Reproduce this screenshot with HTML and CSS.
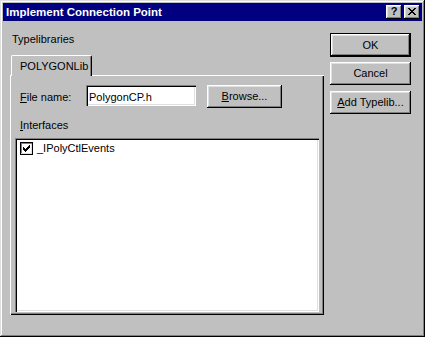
FILE: index.html
```html
<!DOCTYPE html>
<html lang="en">
<head>
  <meta charset="UTF-8">
  <title>Implement Connection Point</title>
  <link rel="stylesheet" href="styles.css">
</head>
<body>
  <div class="window">
    <div class="titlebar">
      <span class="title">Implement Connection Point</span>
      <div class="title-buttons">
        <span class="tbtn help">?</span>
        <span class="tbtn close">
          <svg width="8" height="7" viewBox="0 0 8 7" shape-rendering="crispEdges">
            <path fill="#000" d="M0 0h2v1h-2z M6 0h2v1h-2z M1 1h2v1h-2z M5 1h2v1h-2z M2 2h4v1h-4z M3 3h2v1h-2z M2 4h4v1h-4z M1 5h2v1h-2z M5 5h2v1h-2z M0 6h2v1h-2z M6 6h2v1h-2z"/>
          </svg>
        </span>
      </div>
    </div>

    <div class="dialog">
      <div class="main">
        <div class="group-label">Typelibraries</div>

        <!-- tab strip -->
        <div class="tabs">
          <div class="tab">POLYGONLib</div>
        </div>

        <div class="panel">
          <div class="file-row">
            <label class="file-label"><u>F</u>ile name:</label>
            <input class="field" type="text" value="PolygonCP.h">
            <button class="btn browse"><u>B</u>rowse...</button>
          </div>

          <div class="list-label"><u>I</u>nterfaces</div>

          <div class="listbox">
            <div class="item">
              <svg class="check" width="13" height="13" viewBox="0 0 13 13" shape-rendering="crispEdges">
                <rect x="0" y="0" width="13" height="13" fill="#000"/>
                <rect x="1" y="1" width="11" height="11" fill="#808080"/>
                <rect x="2" y="2" width="10" height="10" fill="#fff"/>
                <rect x="1" y="11" width="11" height="1" fill="#dfdfdf"/>
                <rect x="11" y="2" width="1" height="10" fill="#dfdfdf"/>
                <path fill="#000" d="M9 3h1v1h-1z M8 4h2v1h-2z M3 5h1v1h-1z M7 5h3v1h-3z M3 6h2v1h-2z M6 6h3v1h-3z M3 7h5v1h-5z M4 8h3v1h-3z M5 9h1v1h-1z"/>
              </svg>
              <span>_IPolyCtlEvents</span>
            </div>
          </div>
        </div>
      </div>

      <div class="side">
        <button class="btn default">OK</button>
        <button class="btn">Cancel</button>
        <button class="btn"><u>A</u>dd Typelib...</button>
      </div>
    </div>
  </div>
</body>
</html>
```

FILE: styles.css
```css
* {
  box-sizing: border-box;
}
body {
  margin: 0;
  font-family: "Liberation Sans", Arial, sans-serif;
  font-size: 11px;
  color: #000;
  background: #c0c0c0;
}
.window {
  width: 425px;
  height: 337px;
  padding: 3px;
  background: #c0c0c0;
  box-shadow: inset -1px -1px #000, inset 1px 1px #dfdfdf, inset -2px -2px #808080, inset 2px 2px #fff;
  display: flex;
  flex-direction: column;
}
.titlebar {
  height: 18px;
  flex-shrink: 0;
  background: #000080;
  color: #fff;
  display: flex;
  align-items: center;
  justify-content: space-between;
  padding: 0 2px 0 3px;
}
.title {
  font-weight: bold;
  font-size: 11.5px;
  line-height: 13px;
}
.title-buttons {
  display: flex;
  gap: 2px;
}
.tbtn {
  width: 16px;
  height: 14px;
  background: #c0c0c0;
  color: #000;
  box-shadow: inset -1px -1px #000, inset 1px 1px #fff, inset -2px -2px #808080, inset 2px 2px #dfdfdf;
  display: flex;
  align-items: center;
  justify-content: center;
}
.tbtn.help {
  font-weight: bold;
  font-size: 11px;
  line-height: 11px;
  padding-bottom: 1px;
}
.tbtn.close svg {
  margin-top: -1px;
}
.dialog {
  flex: 1;
  display: flex;
  gap: 6px;
  padding: 12px 0 0 7px;
}
.main {
  width: 314px;
  display: flex;
  flex-direction: column;
}
.group-label {
  line-height: 13px;
  margin-left: 2px;
}
.tabs {
  display: flex;
  margin-top: 9px;
  padding-left: 1px;
  position: relative;
  z-index: 1;
  margin-bottom: -1px;
}
.tab {
  width: 81px;
  height: 21px;
  background: #c0c0c0;
  border-left: 1px solid #fff;
  border-top: 1px solid #fff;
  border-right: 1px solid #000;
  border-radius: 2px 2px 0 0;
  box-shadow: inset -1px 0 #808080;
  padding: 4px 0 0 8px;
  line-height: 13px;
}
.panel {
  height: 240px;
  background: #c0c0c0;
  box-shadow: inset 1px 1px #fff, inset -1px -1px #000, inset -2px -2px #808080;
  padding: 10px 5px 0 5px;
  display: flex;
  flex-direction: column;
}
.file-row {
  display: flex;
  align-items: flex-start;
  padding-left: 5px;
  height: 23px;
}
.file-label {
  width: 66px;
  line-height: 13px;
  margin-top: 6px;
}
.field {
  width: 110px;
  height: 21px;
  margin: 0;
  border: none;
  outline: none;
  background: #fff;
  font: inherit;
  color: #000;
  padding: 2px 0 0 3px;
  box-shadow: inset 1px 1px #808080, inset 2px 2px #000, inset -1px -1px #fff, inset -2px -2px #dfdfdf;
}
.btn {
  margin: 0;
  padding: 0;
  border: none;
  font: inherit;
  color: #000;
  background: #c0c0c0;
  height: 23px;
  width: 81px;
  line-height: 13px;
  text-align: center;
  box-shadow: inset -1px -1px #000, inset 1px 1px #fff, inset -2px -2px #808080, inset 2px 2px #dfdfdf;
}
.btn.default {
  border: 1px solid #000;
  height: 24px;
  margin-bottom: -1px;
}
.btn.browse {
  width: 75px;
  margin-left: 11px;
}
.list-label {
  line-height: 13px;
  margin-top: 11px;
  padding-left: 5px;
}
.listbox {
  margin-top: 6px;
  width: 304px;
  height: 174px;
  background: #fff;
  padding: 2px;
  box-shadow: inset 1px 1px #808080, inset 2px 2px #000, inset -1px -1px #fff, inset -2px -2px #dfdfdf;
}
.item {
  display: flex;
  align-items: center;
  height: 17px;
  padding-left: 3px;
  line-height: 13px;
}
.check {
  display: block;
  margin-right: 4px;
}
.side {
  width: 81px;
  display: flex;
  flex-direction: column;
  gap: 6px;
}
```
